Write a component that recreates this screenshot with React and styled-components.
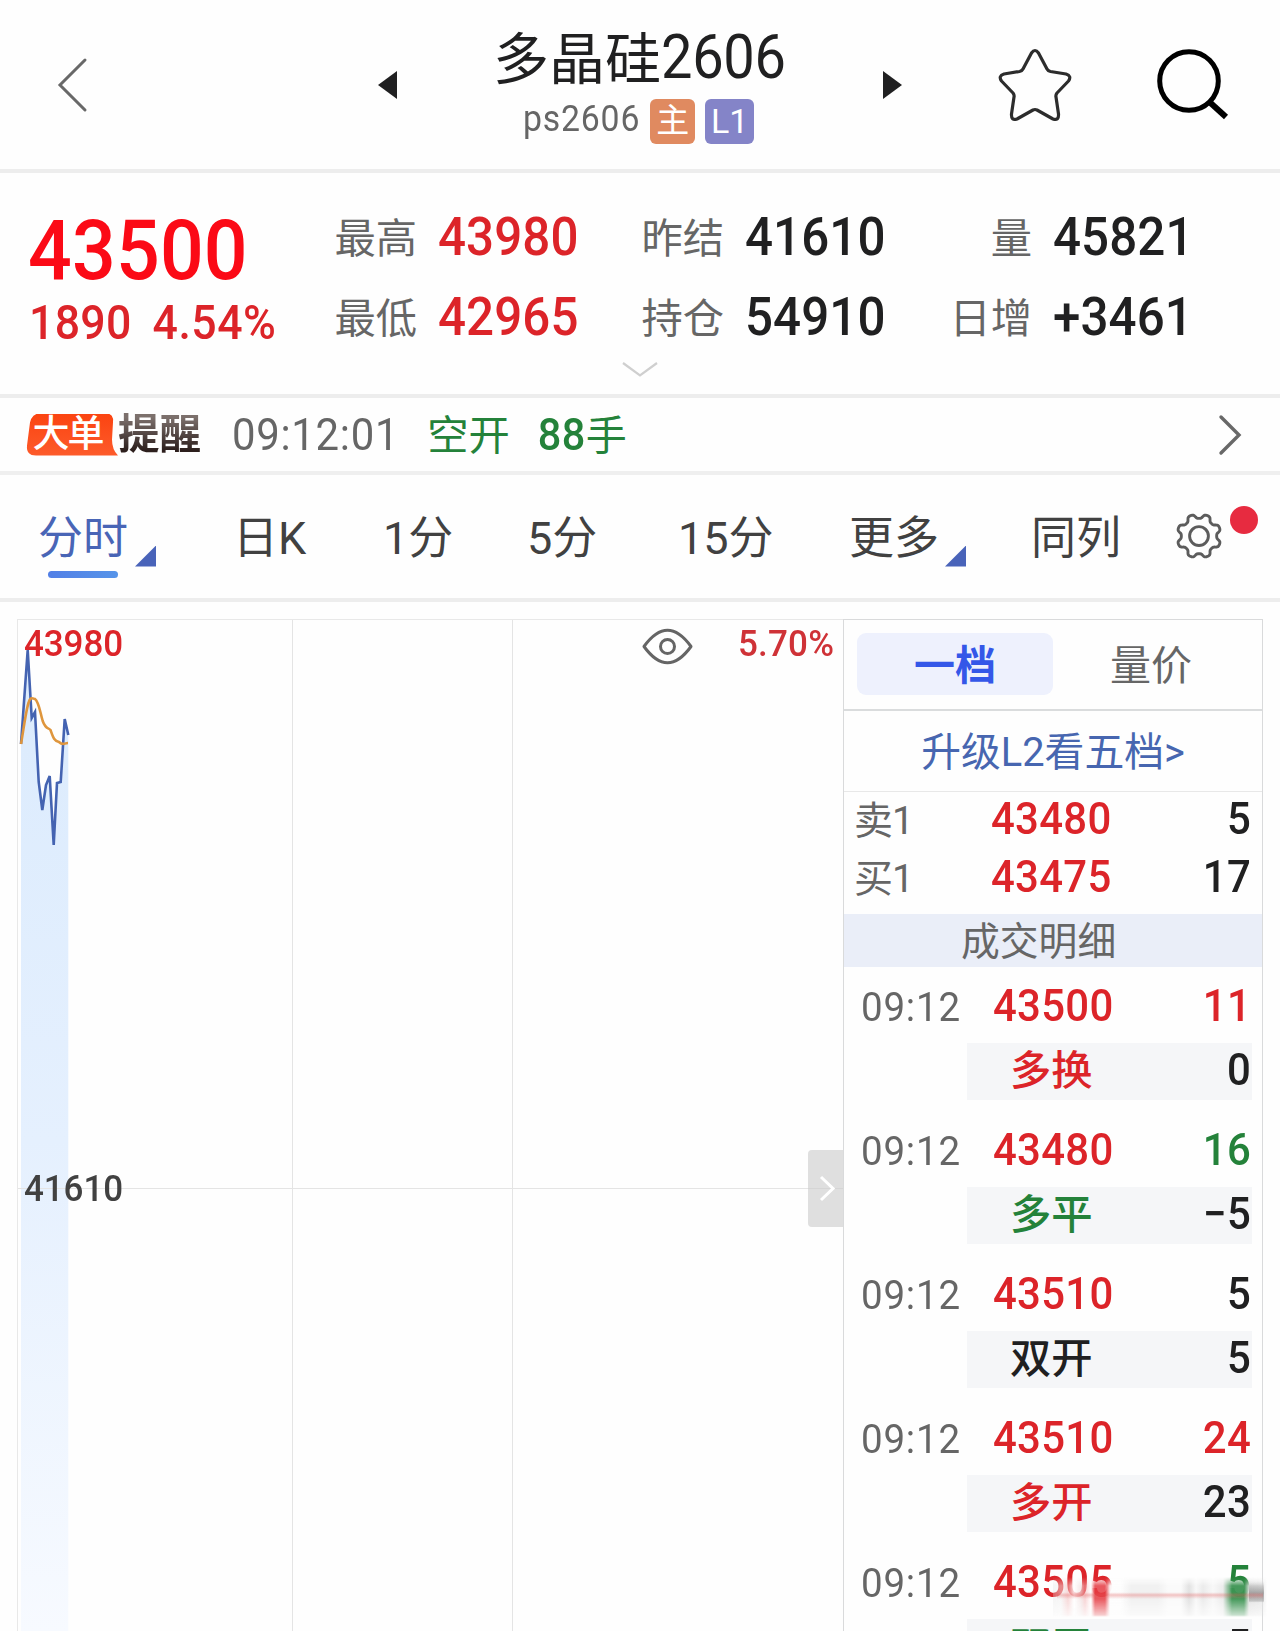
import React from "react";
import styled, { createGlobalStyle } from "styled-components";

const RED = "#dc2429";
const GREEN = "#24823a";
const INK = "#202021";
const GREY = "#666666";
const LINE = "#ededed";

const Global = createGlobalStyle`
  *, *::before, *::after { box-sizing: border-box; }
  html, body { margin: 0; background: #fefefe; }
  body { font-family: Roboto, "Noto Sans CJK SC", sans-serif; color: ${INK}; }
`;

const Page = styled.main`
  position: relative;
  width: 1280px;
  height: 1631px;
  overflow: hidden;
  display: flex;
  flex-direction: column;
  background: #fefefe;
`;

const Text = styled.span`
  display: block;
  flex: none;
  white-space: pre;
  font-size: ${(p) => p.$size}px;
  line-height: 1;
  font-weight: ${(p) => p.$weight || 400};
  letter-spacing: ${(p) => p.$track || 0}px;
  color: ${(p) => p.$color || "inherit"};
  margin-left: ${(p) => p.$gap || 0}px;
`;

/* Tall, narrow numerals */
const Num = styled(Text)`
  transform: scaleY(1.075);
`;

/* Chinese labels sit slightly below the numeral centre line */
const Han = styled(Text)`
  transform: translateY(2px);
`;

const Icon = styled.svg`
  display: block;
  flex: none;
  overflow: visible;
  fill: none;
  margin-left: ${(p) => p.$gap || 0}px;
`;

/* Header */
const Header = styled.header`
  flex: none;
  display: grid;
  grid-template-columns: 378px 19px 486px 116px 158px 123px;
  align-items: center;
  height: 173px;
  border-bottom: 4px solid ${LINE};
`;

const TitleBlock = styled.div`
  display: flex;
  flex-direction: column;
  align-items: flex-start;
  align-self: start;
  padding: 28px 0 0 96px;
`;

const TitleLine = styled.h1`
  display: flex;
  align-items: center;
  height: 60px;
  margin: 0;
`;

const CodeLine = styled.div`
  display: flex;
  align-items: center;
  height: 46px;
  margin: 10px 0 0 30px;

  > :first-child { margin-bottom: 4px; }
`;

const Badge = styled.span`
  display: flex;
  align-items: center;
  justify-content: center;
  width: ${(p) => p.$width}px;
  height: 45px;
  margin-left: ${(p) => p.$gap}px;
  border-radius: 6px;
  background: ${(p) => p.$bg};
  color: #fff;
  font-size: ${(p) => p.$size}px;
  line-height: 46px;
`;

/* Quote summary */
const Quote = styled.section`
  flex: none;
  position: relative;
  display: grid;
  grid-template-columns: 335px 307px 308px 1fr;
  height: 225px;
  border-bottom: 4px solid ${LINE};
`;

const Last = styled.div`
  padding: 40px 0 0 28px;
`;

const LastChange = styled.div`
  display: flex;
  height: 45px;
  margin-top: 11px;
`;

const StatColumn = styled.div`
  padding-top: 25px;
`;

const Stat = styled.div`
  display: grid;
  grid-template-columns: 82px auto;
  column-gap: 21px;
  align-items: center;
  height: 79.5px;

  > :first-child { justify-self: end; }
`;

const Expand = styled.div`
  position: absolute;
  left: 622px;
  top: 189px;
`;

/* Large order alert */
const Alert = styled.section`
  flex: none;
  display: flex;
  align-items: center;
  height: 77px;
  padding: 0 39px 0 26px;
  border-bottom: 4px solid #efefef;
`;

const AlertTag = styled.span`
  display: flex;
  align-items: center;
  justify-content: center;
  width: 92px;
  height: 42px;
  padding-right: 9px;
  background: linear-gradient(#fb4411, #fd5b2b);
  clip-path: path("M14 0 H80 Q88 0 87 9 L86 26 Q86 36 92 42 H10 Q0 42 1 32 L4 9 Q6 0 14 0Z");
  color: #fff;
  font-size: 37px;
  font-weight: 500;
  font-style: oblique 8deg;
  line-height: 44px;
  letter-spacing: -2px;
`;

const AlertName = styled.span`
  font-size: 41.5px;
  font-weight: 700;
  font-style: oblique 8deg;
  line-height: 44px;
  color: transparent;
  background: linear-gradient(#7c706c 10%, #2d1f1d 85%);
  background-clip: text;
  -webkit-background-clip: text;
`;

const Spacer = styled.span`
  flex: 1;
`;

/* Period tabs */
const Tabs = styled.nav`
  flex: none;
  display: grid;
  grid-template-columns: 233px 150px 144px 151px 171px 182px 144px 1fr;
  height: 127px;
  border-bottom: 4px solid ${LINE};
  color: #414141;
`;

const Tab = styled.div`
  position: relative;
  display: flex;
  align-items: center;
  height: 123px;
  padding-left: ${(p) => p.$pad || 0}px;

  ${(p) => p.$active && `
    color: #4965b6;
    &::after {
      content: "";
      position: absolute;
      left: 48px;
      top: 96px;
      width: 70px;
      height: 7px;
      border-radius: 4px;
      background: linear-gradient(90deg, #527fe6, #5694e9);
    }
  `}
`;

const Corner = styled.i`
  width: 21px;
  height: 21px;
  margin: 39px 0 0 ${(p) => p.$gap}px;
  background: #4963b9;
  clip-path: polygon(100% 0, 100% 100%, 0 100%);
`;

const RedDot = styled.i`
  position: absolute;
  left: 55px;
  top: 31px;
  width: 28px;
  height: 28px;
  border-radius: 50%;
  background: #e72b40;
`;

/* Chart and side panel */
const Body = styled.section`
  flex: none;
  display: grid;
  grid-template-columns: 826px 420px;
  height: 1012px;
  margin: 17px 0 0 17px;
`;

const Chart = styled.div`
  position: relative;
  border: solid #e8e8e8;
  border-width: 1px 0 0 1px;
`;

const Plot = styled.svg`
  display: block;
  width: 825px;
  height: 1011px;
`;

const ChartLabel = styled(Num)`
  position: absolute;
  left: ${(p) => p.$x}px;
  top: ${(p) => p.$y}px;
`;

const EyeButton = styled.div`
  position: absolute;
  left: 624px;
  top: 8px;
`;

const Handle = styled.div`
  position: absolute;
  right: 0;
  top: 530px;
  display: flex;
  align-items: center;
  justify-content: center;
  width: 35px;
  height: 77px;
  padding-left: 3px;
  border-radius: 4px 0 0 4px;
  background: rgba(205, 205, 205, 0.64);
`;

const Side = styled.aside`
  display: flex;
  flex-direction: column;
  border: solid #d9dadb;
  border-width: 1px 1px 0 1px;
`;

const SideTabs = styled.div`
  flex: none;
  display: grid;
  grid-template-columns: 196px 196px;
  height: 91px;
  padding: 13px;
  border-bottom: 2px solid #dadcdd;
`;

const SideTab = styled.div`
  display: flex;
  align-items: center;
  justify-content: center;
  height: 62px;
  border-radius: 9px;
  background: ${(p) => (p.$active ? "#eef1fd" : "transparent")};
`;

const Upgrade = styled.div`
  flex: none;
  display: flex;
  align-items: center;
  justify-content: center;
  height: 81px;
  border-bottom: 1px solid #e8e8e8;
`;

const Book = styled.div`
  flex: none;
  height: 122px;
`;

const BookRow = styled.div`
  display: grid;
  grid-template-columns: 137px 1fr auto;
  align-items: center;
  height: 58px;
  padding: 0 11px 4px 10px;
`;

const DealsTitle = styled.div`
  flex: none;
  display: flex;
  align-items: center;
  height: 53px;
  padding-left: 117px;
  background: #eaeef8;
`;

const Deal = styled.div`
  flex: none;
  height: 144px;
`;

const DealTop = styled.div`
  display: grid;
  grid-template-columns: 132px 1fr auto;
  align-items: center;
  height: 76px;
  padding: 1px 11px 0 17px;

  > :first-child { margin-top: 3px; }
`;

const DealNote = styled.div`
  display: flex;
  align-items: center;
  justify-content: space-between;
  width: 285px;
  height: 57px;
  margin-left: 123px;
  padding: 0 1px 3px 43px;
  background: #f5f6f8;
`;

const Deals = styled.div`
  flex: 1;
  min-height: 0;
  overflow: hidden;
`;

/* Smeared strip in the bottom corner */
const Smear = styled.div`
  position: absolute;
  left: 1053px;
  top: 1577px;
  width: 214px;
  height: 40px;
  background:
    linear-gradient(transparent 38%, rgba(225, 90, 90, 0.35) 45%, transparent 55%) 4px 0 / 206px 100% no-repeat,
    linear-gradient(transparent 10%, rgba(120, 120, 120, 0.6) 40%, rgba(150, 150, 150, 0.5) 60%, transparent 64%) 196px 0 / 15px 100% no-repeat,
    linear-gradient(90deg, rgba(225,225,225,.3) 0, rgba(240,240,240,.5) 8px, rgba(240,180,180,.5) 15px, rgba(255,255,255,.85) 21px, rgba(240,225,225,.7) 28px, rgba(240,170,172,.5) 32px, rgba(255,255,255,.9) 38px, rgba(229,60,67,.85) 42px 52px, rgba(253,253,253,.95) 57px 68px, #f1f1f1 78px 105px, #fafafa 115px 128px, #e2e2e2 136px, #f8f8f8 143px, #ebebeb 150px, #f8f8f8 160px, #ececec 170px, rgba(61,148,83,.95) 179px 191px, rgba(225,225,225,.9) 196px, rgba(225,225,225,.7) 208px, rgba(255,255,255,.3) 214px);
  mask-image: linear-gradient(transparent, #000 22%, #000 55%, rgba(0, 0, 0, 0.3) 95%, transparent);
`;

const deals = [
  { price: "43500", qty: "11", tone: RED, kind: "多换", kindTone: RED, delta: "0" },
  { price: "43480", qty: "16", tone: GREEN, kind: "多平", kindTone: GREEN, delta: "−5" },
  { price: "43510", qty: "5", tone: INK, kind: "双开", kindTone: INK, delta: "5" },
  { price: "43510", qty: "24", tone: RED, kind: "多开", kindTone: RED, delta: "23" },
  { price: "43505", qty: "5", tone: GREEN, kind: "双平", kindTone: GREEN, delta: "5" },
];

const PRICE_LINE =
  "M3 124 L9.7 30 L13.7 98 L17 92 L20.7 162 L24.3 190 L28 165 L31.7 156 L35.7 225 L39 163 L42.7 162 L46.7 99 L50.3 115";
const AVERAGE_LINE =
  "M3 124 C5 113 8 90 10.5 83 C12 77 14 78 17 79 C21 82 22 92 24.7 101 C28 110 30 107 32.5 110 C35 117 36 121 41 122 C45 126 46 123 50 123";

/* Eight rounded teeth with a notch at each compass point */
const GEAR = Array.from({ length: 160 }, (_, i) => {
  const angle = (i / 160) * Math.PI * 2;
  const radius = 20.7 - (2.3 * Math.tanh(1.7 * Math.cos(8 * angle))) / Math.tanh(1.7);
  return `${(24 + radius * Math.sin(angle)).toFixed(2)},${(24 - radius * Math.cos(angle)).toFixed(2)}`;
}).join(" ");

function StatItem({ label, value, tone }) {
  return (
    <Stat>
      <Han $size={41.3} $color={GREY}>{label}</Han>
      <Num $size={49.3} $weight={500} $color={tone} $track={0.1}>{value}</Num>
    </Stat>
  );
}

function BookItem({ label, price, qty }) {
  return (
    <BookRow>
      <Han $size={39} $color={GREY} $track={-1}>{label}</Han>
      <Num $size={41.9} $weight={500} $color={RED} $track={0.3}>{price}</Num>
      <Num $size={41.9} $weight={500} $track={0.3}>{qty}</Num>
    </BookRow>
  );
}

function DealItem({ price, qty, tone, kind, kindTone, delta }) {
  return (
    <Deal>
      <DealTop>
        <Num $size={38.5} $color={GREY} $track={0.8}>09:12</Num>
        <Num $size={41.9} $weight={500} $color={RED} $track={0.3}>{price}</Num>
        <Num $size={41.9} $weight={500} $color={tone} $track={0.3}>{qty}</Num>
      </DealTop>
      <DealNote>
        <Han $size={41.3} $weight={500} $color={kindTone}>{kind}</Han>
        <Num $size={41.9} $weight={500} $track={0.3}>{delta}</Num>
      </DealNote>
    </Deal>
  );
}

export default function App() {
  return (
    <Page>
      <Global />
      <Header>
        <Icon $gap={58} width="29" height="54" viewBox="0 0 29 54">
          <path d="M27 2 L2 27 L27 52" stroke="#686868" strokeWidth="3" strokeLinecap="round" />
        </Icon>
        <Icon width="19" height="28" viewBox="0 0 19 28">
          <path d="M19 0 V28 L0 14Z" fill={INK} />
        </Icon>
        <TitleBlock>
          <TitleLine>
            <Han $size={56}>多晶硅</Han>
            <Num $size={56} $track={-0.3}>2606</Num>
          </TitleLine>
          <CodeLine>
            <Num $size={33.8} $color={GREY} $track={0.8}>ps2606</Num>
            <Badge $width={45} $gap={10} $size={33} $bg="#e08a60">主</Badge>
            <Badge $width={49} $gap={10} $size={34} $bg="#8484c8">L1</Badge>
          </CodeLine>
        </TitleBlock>
        <Icon width="19" height="28" viewBox="0 0 19 28">
          <path d="M0 0 V28 L19 14Z" fill={INK} />
        </Icon>
        <Icon width="72" height="72" viewBox="0 0 72 72">
          <path
            d="M32.5 4 Q36 -1 39.5 4 L48 20 Q49 22 51.5 22.5 L67 25 Q73 27 69.5 32 L58 44 Q56.500 46 57 48 L59.500 65 Q60 72 54 70 L38 61 Q36 60 34 61 L18 70 Q12 72 12.500 65 L15 48 Q15.500 46 14 44 L2.500 32 Q-1 27 5 25 L20.500 22.500 Q23 22 24 20Z"
            stroke="#2c2c2c" strokeWidth="3.2" strokeLinejoin="round"
          />
        </Icon>
        <Icon width="72" height="72" viewBox="0 0 72 72">
          <circle cx="32" cy="32" r="29.300" stroke="#000" strokeWidth="5" />
          <path d="M52.500 53 L69 68" stroke="#000" strokeWidth="6" />
        </Icon>
      </Header>

      <Quote>
        <Last>
          <Num $size={77} $weight={500} $color="#fb0a16" $track={0.2}>43500</Num>
          <LastChange>
            <Num $size={44.6} $weight={500} $color={RED} $track={0.3} $gap={1}>1890</Num>
            <Num $size={44.6} $weight={500} $color={RED} $track={0.5} $gap={21}>4.54%</Num>
          </LastChange>
        </Last>
        <StatColumn>
          <StatItem label="最高" value="43980" tone={RED} />
          <StatItem label="最低" value="42965" tone={RED} />
        </StatColumn>
        <StatColumn>
          <StatItem label="昨结" value="41610" />
          <StatItem label="持仓" value="54910" />
        </StatColumn>
        <StatColumn>
          <StatItem label="量" value="45821" />
          <StatItem label="日增" value="+3461" />
        </StatColumn>
        <Expand>
          <Icon width="36" height="15" viewBox="0 0 36 15">
            <path d="M1 1 L18 13.500 L35 1" stroke="#cfcfcf" strokeWidth="2.200" />
          </Icon>
        </Expand>
      </Quote>

      <Alert>
        <AlertTag>大单</AlertTag>
        <AlertName>提醒</AlertName>
        <Num $size={41.9} $color={GREY} $track={0.7} $gap={31}>09:12:01</Num>
        <Han $size={41.300} $color={GREEN} $gap={28}>空开</Han>
        <Num $size={41.5} $weight={500} $color={GREEN} $gap={28} $track={0.4}>88</Num>
        <Han $size={41} $color={GREEN}>手</Han>
        <Spacer />
        <Icon width="22" height="40" viewBox="0 0 22 40">
          <path d="M2 2 L20 20 L2 38" stroke="#686868" strokeWidth="3.400" strokeLinecap="round" />
        </Icon>
      </Alert>

      <Tabs>
        <Tab $active $pad={38}>
          <Han $size={45}>分时</Han>
          <Corner $gap={7} />
        </Tab>
        <Tab><Han $size={45}>日K</Han></Tab>
        <Tab><Han $size={45}>1分</Han></Tab>
        <Tab><Han $size={45}>5分</Han></Tab>
        <Tab><Han $size={45}>15分</Han></Tab>
        <Tab>
          <Han $size={45}>更多</Han>
          <Corner $gap={6} />
        </Tab>
        <Tab><Han $size={45}>同列</Han></Tab>
        <Tab>
          <Icon width="48" height="48" viewBox="0 0 48 50">
            <polygon points={GEAR} stroke="#5c5c5c" strokeWidth="3" strokeLinejoin="round" />
            <circle cx="24" cy="24" r="9.800" stroke="#5c5c5c" strokeWidth="3" />
          </Icon>
          <RedDot />
        </Tab>
      </Tabs>

      <Body>
        <Chart>
          <Plot viewBox="0 0 825 1011">
            <defs>
              <linearGradient id="area" x1="0" y1="0" x2="0" y2="1">
                <stop offset="0" stopColor="#dbebfd" />
                <stop offset="0.5" stopColor="#e5f0fe" />
                <stop offset="1" stopColor="#f7faff" />
              </linearGradient>
            </defs>
            <path d={`${PRICE_LINE} V1011 H3Z`} fill="url(#area)" />
            <path d="M274.500 0 V1011 M494.500 0 V1011 M0 568.500 H825" stroke="#e4e4e4" fill="none" />
            <path d={PRICE_LINE} stroke="#4463b1" strokeWidth="2.600" fill="none" />
            <path d={AVERAGE_LINE} stroke="#df963d" strokeWidth="2.600" fill="none" />
          </Plot>
          <ChartLabel $x={6} $y={6} $size={35} $weight={500} $color={RED} $track={-0.1}>43980</ChartLabel>
          <ChartLabel $x={6} $y={551} $size={35} $weight={500} $color="#414141" $track={-0.1}>41610</ChartLabel>
          <ChartLabel $x={720} $y={6} $size={35} $weight={500} $color="#cf3237" $track={0.2}>5.70%</ChartLabel>
          <EyeButton>
            <Icon width="51" height="37" viewBox="0 0 51 37">
              <path d="M2 18.500 Q25.500 -14 49 18.500 Q25.500 51 2 18.500Z" stroke="#656565" strokeWidth="3" strokeLinejoin="round" />
              <circle cx="25.500" cy="18.500" r="7" stroke="#656565" strokeWidth="3" />
            </Icon>
          </EyeButton>
          <Handle>
            <Icon width="15" height="25" viewBox="0 0 15 25">
              <path d="M1 1 L13 12.500 L1 24" stroke="#fff" strokeWidth="3" />
            </Icon>
          </Handle>
        </Chart>

        <Side>
          <SideTabs>
            <SideTab $active><Han $size={41} $weight={700} $color="#3457e8">一档</Han></SideTab>
            <SideTab><Han $size={41} $color={GREY}>量价</Han></SideTab>
          </SideTabs>
          <Upgrade><Han $size={39.800} $color="#4766b0">升级L2看五档&gt;</Han></Upgrade>
          <Book>
            <BookItem label="卖1" price="43480" qty="5" />
            <BookItem label="买1" price="43475" qty="17" />
          </Book>
          <DealsTitle><Han $size={38.800} $color={GREY}>成交明细</Han></DealsTitle>
          <Deals>
            {deals.map((deal, i) => <DealItem key={i} {...deal} />)}
          </Deals>
        </Side>
      </Body>
      <Smear />
    </Page>
  );
}
